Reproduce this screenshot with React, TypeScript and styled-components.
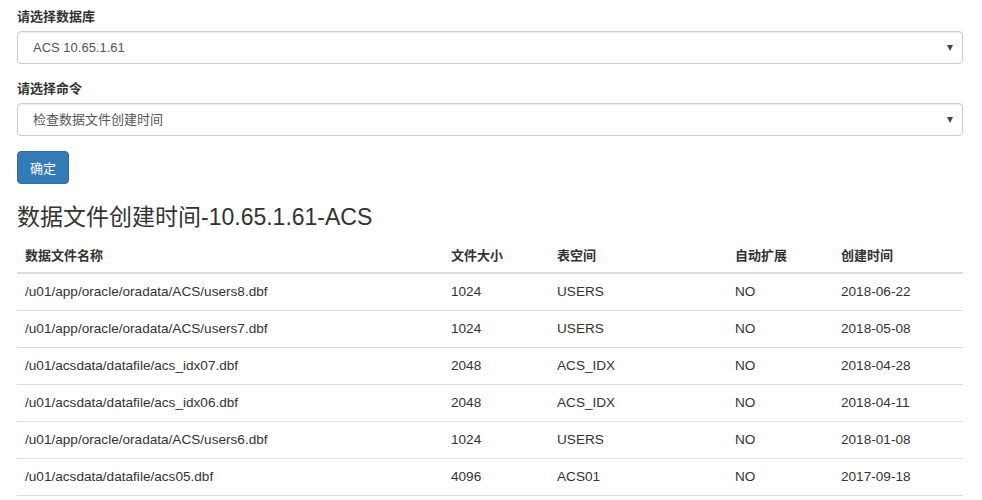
import { createGlobalStyle, styled } from "styled-components";

interface DataFile {
  path: string;
  size: number;
  tablespace: string;
  autoExtend: string;
  created: string;
}

const files: Array<DataFile> = [
  { path: "/u01/app/oracle/oradata/ACS/users8.dbf", size: 1024, tablespace: "USERS", autoExtend: "NO", created: "2018-06-22" },
  { path: "/u01/app/oracle/oradata/ACS/users7.dbf", size: 1024, tablespace: "USERS", autoExtend: "NO", created: "2018-05-08" },
  { path: "/u01/acsdata/datafile/acs_idx07.dbf", size: 2048, tablespace: "ACS_IDX", autoExtend: "NO", created: "2018-04-28" },
  { path: "/u01/acsdata/datafile/acs_idx06.dbf", size: 2048, tablespace: "ACS_IDX", autoExtend: "NO", created: "2018-04-11" },
  { path: "/u01/app/oracle/oradata/ACS/users6.dbf", size: 1024, tablespace: "USERS", autoExtend: "NO", created: "2018-01-08" },
  { path: "/u01/acsdata/datafile/acs05.dbf", size: 4096, tablespace: "ACS01", autoExtend: "NO", created: "2017-09-18" },
];

const columns = [
  { title: "数据文件名称", width: 426 },
  { title: "文件大小", width: 106 },
  { title: "表空间", width: 178 },
  { title: "自动扩展", width: 106 },
  { title: "创建时间", width: 130 },
];

function App() {
  return (
    <>
      <GlobalStyle />
      <Container>
        <FormGroup>
          <Label>请选择数据库</Label>
          <SelectWrap>
            <Select defaultValue="acs">
              <option value="acs">ACS 10.65.1.61</option>
            </Select>
          </SelectWrap>
        </FormGroup>
        <FormGroup>
          <Label>请选择命令</Label>
          <SelectWrap>
            <Select defaultValue="ctime">
              <option value="ctime">检查数据文件创建时间</option>
            </Select>
          </SelectWrap>
        </FormGroup>
        <PrimaryButton type="button">确定</PrimaryButton>
        <Heading>数据文件创建时间-10.65.1.61-ACS</Heading>
        <Table>
          <colgroup>
            {columns.map((c) => (
              <col key={c.title} style={{ width: c.width }} />
            ))}
          </colgroup>
          <thead>
            <tr>
              {columns.map((c) => (
                <Th key={c.title}>{c.title}</Th>
              ))}
            </tr>
          </thead>
          <tbody>
            {files.map((f) => (
              <tr key={f.path}>
                <Td>{f.path}</Td>
                <Td>{f.size}</Td>
                <Td>{f.tablespace}</Td>
                <Td>{f.autoExtend}</Td>
                <Td>{f.created}</Td>
              </tr>
            ))}
          </tbody>
        </Table>
      </Container>
    </>
  );
}

export default App;

const GlobalStyle = createGlobalStyle`
  body {
    margin: 0;
    background: #fff;
    color: #333;
    font-family: "Liberation Sans", Arial, "Noto Sans CJK SC", sans-serif;
    font-size: 14px;
    line-height: 20px;
  }
`;

const Container = styled.div`
  padding: 7px 19px 0 17px;
`;

const FormGroup = styled.div`
  margin-bottom: 15px;
`;

const Label = styled.label`
  display: block;
  font-weight: bold;
  font-size: 13px;
  margin-bottom: 4px;
  color: #333;
`;

const SelectWrap = styled.div`
  position: relative;
  &::after {
    content: "";
    position: absolute;
    right: 10px;
    top: 14px;
    border-left: 3px solid transparent;
    border-right: 3px solid transparent;
    border-top: 6px solid #444;
    pointer-events: none;
  }
`;

const Select = styled.select`
  appearance: none;
  display: block;
  width: 100%;
  height: 33px;
  padding: 0 15px;
  font-family: "Liberation Sans", Arial, "Noto Sans CJK SC", sans-serif;
  font-size: 13px;
  color: #555;
  background: #fff;
  border: 1px solid #ccc;
  border-radius: 4px;
  box-shadow: inset 0 1px 1px rgba(0, 0, 0, 0.075);
`;

const PrimaryButton = styled.button`
  display: block;
  height: 33px;
  padding: 0 12px;
  font-family: "Liberation Sans", Arial, "Noto Sans CJK SC", sans-serif;
  font-size: 13px;
  color: #fff;
  background-color: #337ab7;
  border: 1px solid #2e6da4;
  border-radius: 4px;
`;

const Heading = styled.h3`
  margin: 19px 0 5px;
  font-size: 23px;
  font-weight: normal;
  line-height: 28px;
  color: #333;
`;

const Table = styled.table`
  width: 946px;
  border-collapse: collapse;
  table-layout: fixed;
`;

const Th = styled.th`
  text-align: left;
  font-weight: bold;
  font-size: 13px;
  padding: 10px 8px 6px;
  line-height: 20px;
  border-bottom: 2px solid #ddd;
`;

const Td = styled.td`
  padding: 8px;
  line-height: 20px;
  font-size: 13.6px;
  border-bottom: 1px solid #ddd;
  white-space: nowrap;
`;
